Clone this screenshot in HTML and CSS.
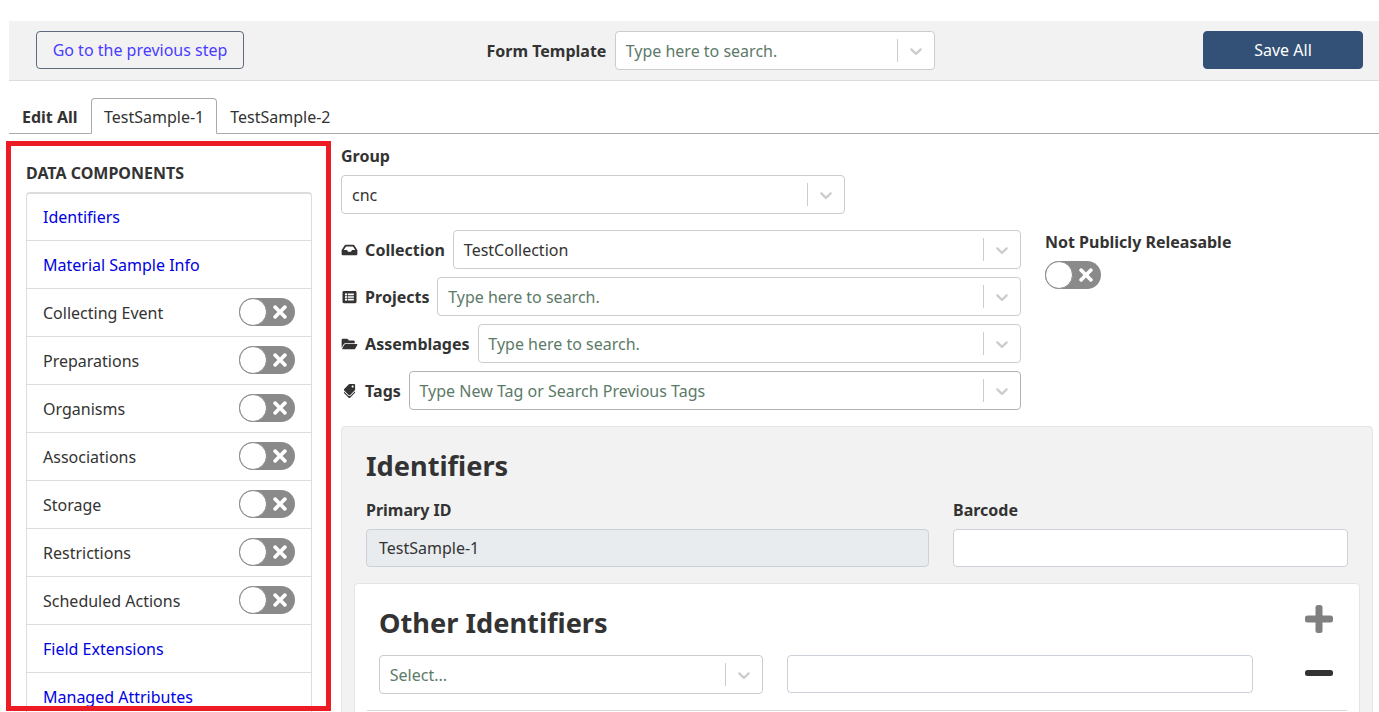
FILE: index.html
```html
<!DOCTYPE html>
<html lang="en">
<head>
<meta charset="utf-8">
<title>Edit samples</title>
<link rel="stylesheet" href="styles.css">
</head>
<body>
<svg class="defs" aria-hidden="true">
  <symbol id="chev" viewBox="0 0 20 20"><path d="M4.516 7.548c0.436-0.446 1.043-0.481 1.576 0l3.908 3.747 3.908-3.747c0.533-0.481 1.141-0.446 1.576 0 0.436 0.445 0.408 1.197 0 1.615-0.406 0.418-4.695 4.502-4.695 4.502-0.217 0.223-0.502 0.335-0.789 0.335s-0.572-0.112-0.79-0.335c0 0-4.287-4.084-4.695-4.502s-0.436-1.17 0-1.615z"/></symbol>
  <symbol id="x" viewBox="0 0 352 512"><path d="M242.72 256l100.07-100.07c12.28-12.28 12.28-32.19 0-44.48l-22.24-22.24c-12.28-12.28-32.19-12.28-44.48 0L176 189.28 75.93 89.21c-12.28-12.28-32.19-12.28-44.48 0L9.21 111.45c-12.28 12.28-12.28 32.19 0 44.48L109.28 256 9.21 356.07c-12.28 12.28-12.28 32.19 0 44.48l22.24 22.24c12.28 12.28 32.2 12.28 44.48 0L176 322.72l100.07 100.07c12.28 12.28 32.2 12.28 44.48 0l22.24-22.24c12.28-12.28 12.28-32.19 0-44.48L242.72 256z"/></symbol>
</svg>
<div class="page">
  <header class="topbar">
    <button class="btn-back">Go to the previous step</button>
    <div class="template">
      <label class="bold">Form Template</label>
      <div class="select w320"><span class="ph">Type here to search.</span><span class="sep"></span><svg class="chev"><use href="#chev"/></svg></div>
    </div>
    <button class="btn-save">Save All</button>
  </header>

  <nav class="tabs">
    <a class="tab bold">Edit All</a>
    <a class="tab active">TestSample-1</a>
    <a class="tab">TestSample-2</a>
  </nav>

  <div class="content">
    <aside class="sidebar">
      <h2 class="side-title">DATA COMPONENTS</h2>
      <ul class="list">
        <li class="row link">Identifiers</li>
        <li class="row link">Material Sample Info</li>
        <li class="row">Collecting Event<span class="switch"><svg class="sx"><use href="#x"/></svg><i class="knob"></i></span></li>
        <li class="row">Preparations<span class="switch"><svg class="sx"><use href="#x"/></svg><i class="knob"></i></span></li>
        <li class="row">Organisms<span class="switch"><svg class="sx"><use href="#x"/></svg><i class="knob"></i></span></li>
        <li class="row">Associations<span class="switch"><svg class="sx"><use href="#x"/></svg><i class="knob"></i></span></li>
        <li class="row">Storage<span class="switch"><svg class="sx"><use href="#x"/></svg><i class="knob"></i></span></li>
        <li class="row">Restrictions<span class="switch"><svg class="sx"><use href="#x"/></svg><i class="knob"></i></span></li>
        <li class="row">Scheduled Actions<span class="switch"><svg class="sx"><use href="#x"/></svg><i class="knob"></i></span></li>
        <li class="row link">Field Extensions</li>
        <li class="row link">Managed Attributes</li>
      </ul>
    </aside>

    <main class="main">
      <label class="bold field-label">Group</label>
      <div class="select w504"><span class="val">cnc</span><span class="sep"></span><svg class="chev"><use href="#chev"/></svg></div>

      <div class="meta">
        <div class="meta-left">
          <div class="meta-row">
            <svg class="ic" viewBox="0 0 576 512"><path d="M567.938 243.908L462.25 85.374A48.003 48.003 0 0 0 422.311 64H153.689a48 48 0 0 0-39.938 21.374L8.062 243.908A47.994 47.994 0 0 0 0 270.533V400c0 26.51 21.49 48 48 48h480c26.51 0 48-21.49 48-48V270.533a47.994 47.994 0 0 0-8.062-26.625zM162.252 128h251.497l85.333 128H376l-32 64H232l-32-64H76.918l85.334-128z"/></svg>
            <label class="bold">Collection</label>
            <div class="select grow"><span class="val">TestCollection</span><span class="sep"></span><svg class="chev"><use href="#chev"/></svg></div>
          </div>
          <div class="meta-row">
            <svg class="ic" viewBox="0 0 512 512"><path d="M464 480H48c-26.51 0-48-21.49-48-48V80c0-26.51 21.49-48 48-48h416c26.51 0 48 21.49 48 48v352c0 26.51-21.49 48-48 48zM128 120c-22.091 0-40 17.909-40 40s17.909 40 40 40 40-17.909 40-40-17.909-40-40-40zm0 96c-22.091 0-40 17.909-40 40s17.909 40 40 40 40-17.909 40-40-17.909-40-40-40zm0 96c-22.091 0-40 17.909-40 40s17.909 40 40 40 40-17.909 40-40-17.909-40-40-40zm288-136v-32c0-6.627-5.373-12-12-12H204c-6.627 0-12 5.373-12 12v32c0 6.627 5.373 12 12 12h200c6.627 0 12-5.373 12-12zm0 96v-32c0-6.627-5.373-12-12-12H204c-6.627 0-12 5.373-12 12v32c0 6.627 5.373 12 12 12h200c6.627 0 12-5.373 12-12zm0 96v-32c0-6.627-5.373-12-12-12H204c-6.627 0-12 5.373-12 12v32c0 6.627 5.373 12 12 12h200c6.627 0 12-5.373 12-12z"/></svg>
            <label class="bold">Projects</label>
            <div class="select grow"><span class="ph">Type here to search.</span><span class="sep"></span><svg class="chev"><use href="#chev"/></svg></div>
          </div>
          <div class="meta-row">
            <svg class="ic" viewBox="0 0 576 512"><path d="M572.694 292.093L500.27 416.248A63.997 63.997 0 0 1 444.989 448H45.025c-18.523 0-30.064-20.093-20.731-36.093l72.424-124.155A64 64 0 0 1 152 256h399.964c18.523 0 30.064 20.093 20.73 36.093zM152 224h328v-48c0-26.51-21.49-48-48-48H272l-64-64H48C21.49 64 0 85.49 0 112v278.046l69.077-118.418C86.214 242.25 117.989 224 152 224z"/></svg>
            <label class="bold">Assemblages</label>
            <div class="select grow"><span class="ph">Type here to search.</span><span class="sep"></span><svg class="chev"><use href="#chev"/></svg></div>
          </div>
          <div class="meta-row">
            <svg class="ic" viewBox="0 0 640 640"><path transform="rotate(90 320 320) translate(0 64)" d="M497.941 225.941L286.059 14.059A48 48 0 0 0 252.118 0H48C21.49 0 0 21.49 0 48v204.118a48 48 0 0 0 14.059 33.941l211.882 211.882c18.744 18.745 49.136 18.746 67.882 0l204.118-204.118c18.745-18.745 18.745-49.137 0-67.882zM112 160c-26.51 0-48-21.49-48-48s21.49-48 48-48 48 21.49 48 48-21.49 48-48 48zm513.941 133.823L421.823 497.941c-18.745 18.745-49.137 18.745-67.882 0l-.36-.36L527.64 323.522c16.999-16.999 26.36-39.6 26.36-63.64s-9.362-46.641-26.36-63.64L331.397 0h48.721a48 48 0 0 1 33.941 14.059l211.882 211.882c18.745 18.745 18.745 49.137 0 67.882z"/></svg>
            <label class="bold">Tags</label>
            <div class="select grow dark"><span class="ph">Type New Tag or Search Previous Tags</span><span class="sep"></span><svg class="chev"><use href="#chev"/></svg></div>
          </div>
        </div>
        <div class="meta-right">
          <label class="bold field-label">Not Publicly Releasable</label>
          <span class="switch"><svg class="sx"><use href="#x"/></svg><i class="knob"></i></span>
        </div>
      </div>

      <section class="panel">
        <h1 class="heading">Identifiers</h1>
        <div class="id-grid">
          <div>
            <label class="bold field-label">Primary ID</label>
            <div class="input readonly">TestSample-1</div>
          </div>
          <div>
            <label class="bold field-label">Barcode</label>
            <div class="input"></div>
          </div>
        </div>
        <div class="card">
          <div class="card-head">
            <h1 class="heading">Other Identifiers</h1>
            <svg class="pm plus" viewBox="0 0 28 28"><rect x="10.5" y="0" width="7" height="28" rx="2.5"/><rect x="0" y="10.5" width="28" height="7" rx="2.5"/></svg>
          </div>
          <div class="card-row">
            <div class="select w384"><span class="ph">Select...</span><span class="sep"></span><svg class="chev"><use href="#chev"/></svg></div>
            <div class="input w466"></div>
            <svg class="pm minus" viewBox="0 0 28 28"><rect x="0" y="11" width="28" height="6" rx="2.5"/></svg>
          </div>
          <hr class="rule">
        </div>
      </section>
    </main>
  </div>
  <div class="annotation"></div>
</div>
</body>
</html>
```

FILE: styles.css
```css
* { box-sizing: border-box; }
html, body { margin: 0; height: 100%; overflow: hidden; background: #fff; }
body { font-family: "Noto Sans", sans-serif; font-size: 16px; line-height: 24px; color: #333; }
.defs { display: none; }
.bold { font-weight: 700; }
label { display: block; white-space: nowrap; }

.page { position: relative; height: 712px; padding: 21px 0 0 9px; overflow: hidden; }

.topbar { display: flex; align-items: center; height: 60px; padding: 0 16px 1px 27px; background: #f2f2f2; border-bottom: 1px solid #dcdcd8; }
button { font: inherit; cursor: pointer; }
.btn-back { width: 208px; height: 38px; padding: 0; background: transparent; border: 1px solid #5f6b7d; border-radius: 4px; color: #4a3cff; }
.template { display: flex; align-items: center; gap: 8.5px; margin: 1px 0 0 242.5px; }
.btn-save { width: 160px; height: 38px; padding: 0; margin-left: auto; background: #335176; border: 1px solid #335176; border-radius: 4px; color: #fff; }

.tabs { display: flex; height: 53px; padding-top: 17px; border-bottom: 1px solid #aaa; }
.tab { height: 36px; padding: 6px 12px; border: 1px solid transparent; border-radius: 4px 4px 0 0; }
.tab.bold { width: 82px; }
.tab.active { background: #fff; border-color: #aaa #aaa #fff; }

.content { display: flex; }
.sidebar { width: 286px; margin-left: 17px; padding-top: 27px; flex: none; }
.side-title { margin: 0 0 7px; font-size: 16px; line-height: 24px; font-weight: 700; }
.list { margin: 0; padding: 0; list-style: none; border: 1px solid #ddd; border-top-width: 2px; border-radius: 4px 4px 0 0; }
.row { display: flex; align-items: center; justify-content: space-between; height: 48px; padding: 0 16px; border-bottom: 1px solid #ddd; }
.row:first-child { height: 47px; }
.row .switch { margin-top: -1px; }
.link { color: #0000e0; }

.switch { position: relative; display: block; width: 56px; height: 28px; border-radius: 14px; background: #8a8a8a; flex: none; }
.knob { position: absolute; left: 0; top: 0; width: 28px; height: 28px; border-radius: 50%; background: #fff; border: 1px solid #8a8a8a; }
.sx { position: absolute; right: 8px; top: 4px; width: 14px; height: 20px; fill: #fff; }

.main { width: 1032px; margin-left: 29px; padding-top: 10px; flex: none; }
.field-label { margin-bottom: 7px; }

.select { display: flex; align-items: center; height: 39px; padding: 0 8px 0 10px; background: #fff; border: 1px solid #ccc; border-radius: 4px; }
.select.dark { border-color: #b3b3b3; }
.select.grow { flex: 1; min-width: 0; }
.w320 { width: 320px; }
.w504 { width: 504px; }
.w384 { width: 384px; }
.val, .ph { flex: 1; white-space: nowrap; }
.ph { color: #5c7a68; margin-left: -0.25px; }
.sep { width: 1px; height: 23px; background: #ccc; margin-right: 8px; }
.chev { width: 20px; height: 20px; fill: #ccc; }

.meta { display: flex; gap: 24px; margin-top: 16px; }
.meta-left { width: 680px; display: flex; flex-direction: column; gap: 8px; }
.meta-row { display: flex; align-items: center; }
.ic { width: 17px; height: 14px; margin-right: 7.12px; fill: #333; flex: none; }
.meta-row label { margin-right: 8px; }

.panel { height: 320px; margin-top: 16px; padding: 22px 12px 0; background: #f2f2f2; border: 1px solid #e4e4e4; border-radius: 4px; }
.heading { margin: 0; font-size: 27.2px; line-height: 34px; font-weight: 700; }
.panel > .heading { margin: 0 0 15px 12px; }
.id-grid { display: grid; grid-template-columns: 563px 395px; column-gap: 24px; margin: 0 12px; }
.input { height: 38px; padding: 6px 12px; background: #fff; border: 1px solid #ccd0d8; border-radius: 4px; }
.input.readonly { background: #e9ecef; }
.w466 { width: 466px; margin-left: 24px; }

.card { position: relative; margin-top: 16px; padding: 22px 12px 0; background: #fff; border: 1px solid #e4e4e4; border-radius: 4px; height: 200px; }
.card-head { display: flex; justify-content: space-between; align-items: flex-start; padding: 0 12px; height: 49px; }
.card-row { display: flex; align-items: flex-start; padding: 0 12px; }
.pm { width: 28px; height: 28px; flex: none; }
.plus { fill: #808080; margin: -1px 2px 0 0; }
.minus { fill: #333; margin-left: 52px; margin-top: 4px; }
.rule { margin: 16px 0 0; border: 0; border-top: 1px solid #d8d8d8; }

.annotation { position: absolute; left: 6px; top: 141px; width: 325px; height: 570px; border: 5px solid #ed1c24; pointer-events: none; }
```
